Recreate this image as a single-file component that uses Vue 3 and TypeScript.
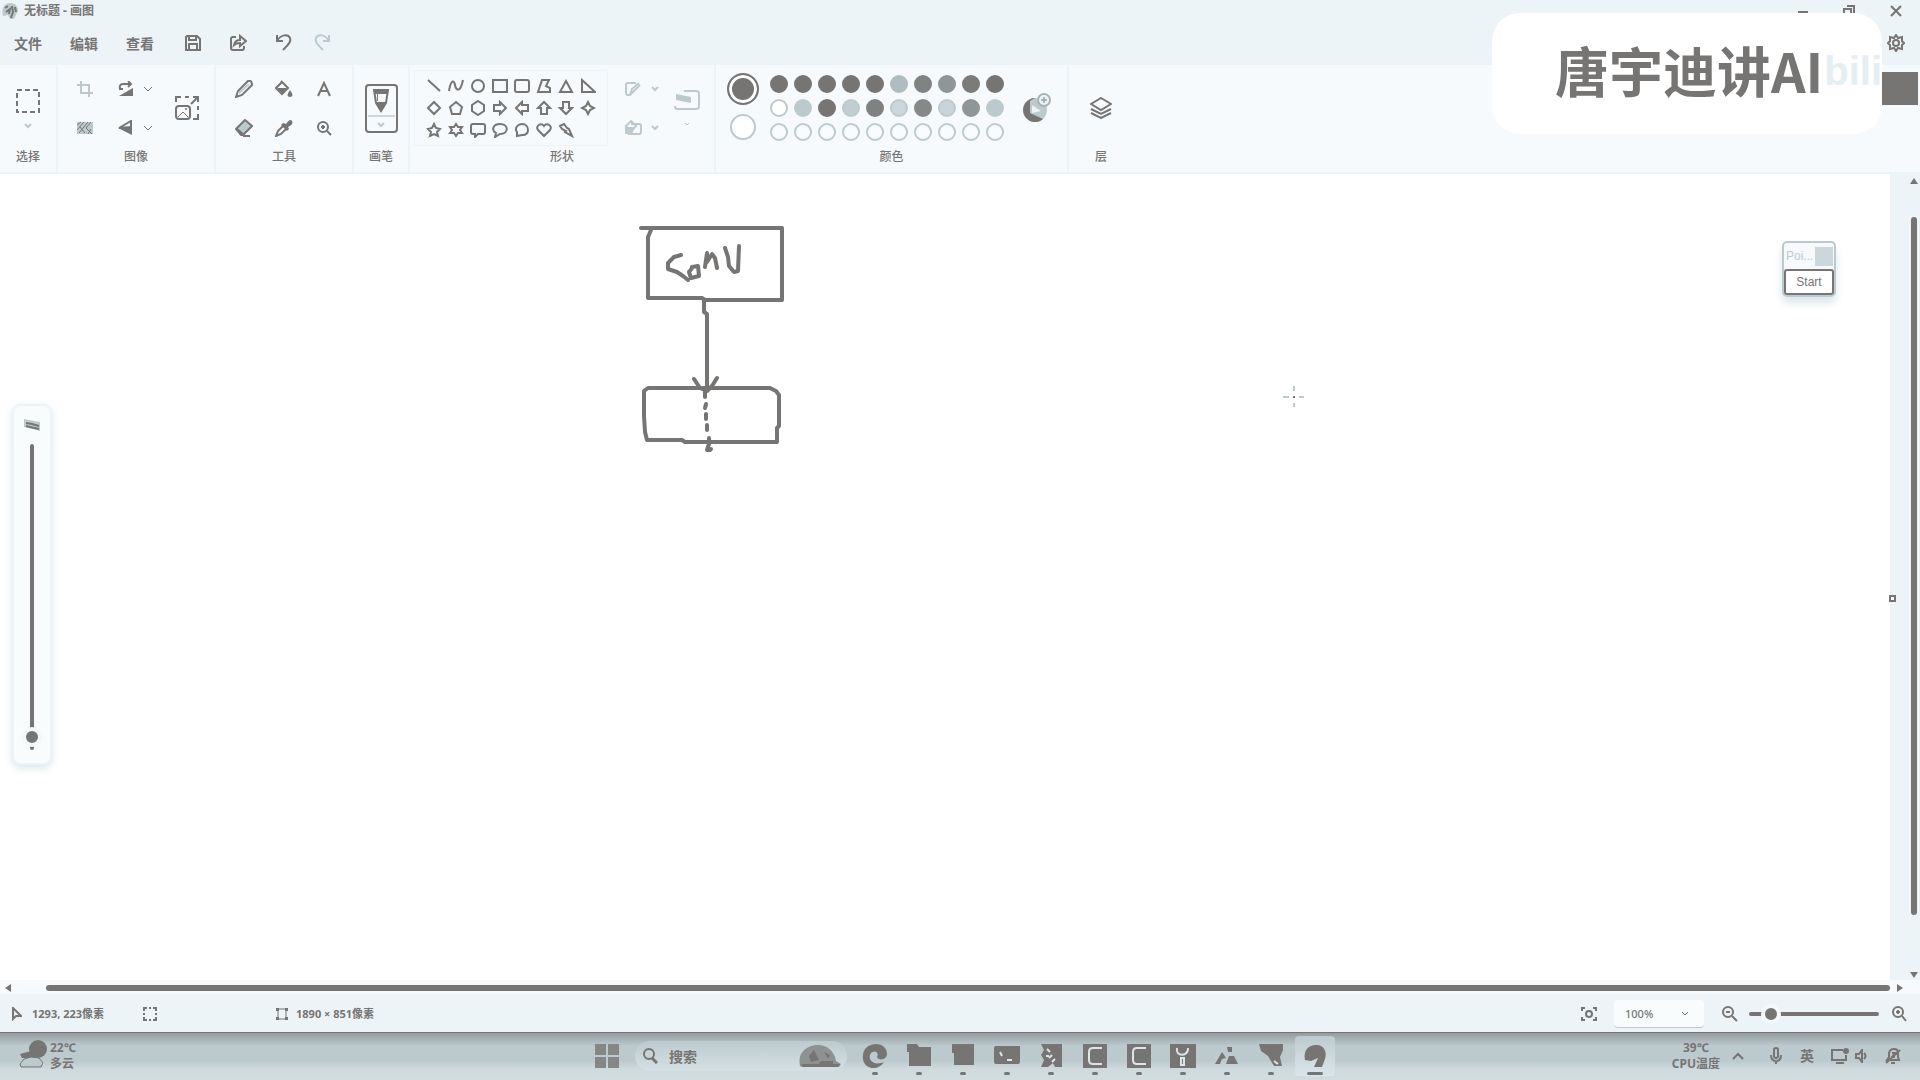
<script setup lang="ts">
import { ref } from 'vue'

interface TaskApp {
  name: string
  body: string
  lines?: string
  active?: boolean
}

const menus: string[] = ['文件', '编辑', '查看']

const shapes: { name: string; d: string }[] = [
  { name: '直线', d: 'M2 2 14 13' },
  { name: '曲线', d: 'M1 13C3 1 6 2 7 7S12 16 15 2' },
  { name: '椭圆', d: 'M8 2a6 6 0 1 0 0 12 6 6 0 1 0 0-12z' },
  { name: '矩形', d: 'M1 2H15V14H1z' },
  { name: '圆角矩形', d: 'M3 2H13Q15 2 15 4V12Q15 14 13 14H3Q1 14 1 12V4Q1 2 3 2z' },
  { name: '多边形', d: 'M6 2H13L10 8 14 10V14H2z' },
  { name: '三角形', d: 'M8 3 14 14H2z' },
  { name: '直角三角形', d: 'M2 2 15 14H2z' },
  { name: '菱形', d: 'M8 2 14 8 8 14 2 8z' },
  { name: '五边形', d: 'M8 2 14 7 12 14H4L2 7z' },
  { name: '六边形', d: 'M8 1 14 5V11L8 15 2 11V5z' },
  { name: '右箭头', d: 'M2 5H8V2L14 8 8 14V11H2z' },
  { name: '左箭头', d: 'M14 5H8V2L2 8 8 14V11H14z' },
  { name: '上箭头', d: 'M5 14V8H2L8 2 14 8H11V14z' },
  { name: '下箭头', d: 'M5 2V8H2L8 14 14 8H11V2z' },
  { name: '四角星', d: 'M8 2 10 6 14 8 10 10 8 14 6 10 2 8 6 6z' },
  { name: '五角星', d: 'M8 2 10 6 14 7 11 10 12 14 8 12 4 14 5 10 2 7 6 6z' },
  { name: '六角星', d: 'M8 2 10 5H14L12 8 14 11H10L8 14 6 11H2L4 8 2 5H6z' },
  { name: '圆角标注', d: 'M3 2H13Q15 2 15 4V10Q15 12 13 12H8L5 15V12H3Q1 12 1 10V4Q1 2 3 2z' },
  { name: '椭圆标注', d: 'M8 2C17 2 17 12 8 12L3 15 4 11C-1 8 1 2 8 2z' },
  { name: '云形标注', d: 'M8 2C16 2 16 14 8 13L3 14V10C0 6 4 2 8 2z' },
  { name: '心形', d: 'M8 14 2 8C-1 4 5 0 8 4 11 0 17 4 14 8z' },
  { name: '闪电', d: 'M2 4 6 2 9 6 11 7 14 14 7 10 8 9 4 7z' },
]

const dark = '#767573'
const mid = '#bccace'
const palette: { fill: string; edge: string }[] = [
  ...[dark, dark, dark, dark, dark, '#b0bdc0', '#808382', '#8f9696', '#7b7b7a', dark].map((fill) => ({ fill, edge: fill })),
  ...['#ffffff', mid, dark, '#c0cdd1', '#7f8281', '#cbd7db', '#858988', '#c8d4d8', '#8f9696', mid].map((fill) => ({
    fill,
    edge: fill === dark || fill.startsWith('#7f') || fill.startsWith('#8') ? fill : mid,
  })),
  ...Array.from({ length: 10 }, () => ({ fill: '#f9fcfd', edge: mid })),
]

const apps: TaskApp[] = [
  { name: 'Edge', body: 'M1 12C2-2 25-3 25 11C25 17 16 18 15 14C18 8 10 6 8 12C6 18 13 23 22 19C15 30-1 25 1 12z' },
  { name: '文件资源管理器', body: 'M1 1H11L13 4H25V23H3V9H1z' },
  { name: '应用', body: 'M2 1H24V22H4V10H2z' },
  { name: '终端', body: 'M0 5Q0 3 2 3H26V19Q26 21 24 21H2Q0 21 0 19z', lines: 'M6 9 8 13M13 17H18' },
  { name: '笔记', body: 'M3 1H24V24H17L15 20 10 24H3L6 17 3 12 6 7z', lines: 'M9 6 12 9M14 12 11 15M17 16 14 19M8 13H11' },
  { name: 'Camtasia', body: 'M1 1H25V25H1z', lines: 'M20 5H11Q7 5 7 9V17Q7 21 11 21H20' },
  { name: 'Camtasia 2', body: 'M1 1H25V25H1z', lines: 'M20 5H11Q7 5 7 9V17Q7 21 11 21H20' },
  { name: '工具', body: 'M0 1H26V25H0z', lines: 'M7 5C5 14 19 14 18 5M11 15V22H14V15z' },
  { name: '图表', body: 'M13 4H18V9H14zM8 9 12 15 8 16 6 21H1zM15 13H20L24 21H12z' },
  { name: '截图', body: 'M1 1H25V7L22 14 24 23H16L10 13 3 8z', lines: 'M16 18 20 21' },
  { name: '画图', body: 'M3 17C1 7 7 2 14 2C23 2 25 10 23 16L20 24H12L16 15 9 18z', active: true },
]

const zoom = ref<string>('100%')
const zoomLevel = ref<number>(11)
const brushSize = ref<number>(1)
</script>

<template>
  <div class="app">
    <header class="top">
      <div class="titlebar">
        <svg class="logo" width="16" height="16" viewBox="0 0 16 16"><path d="M8 0C14 0 16 4 16 8L12 16H8L6 12 1 13C-1 6 2 0 8 0z" fill="#bccace" /><path d="M3 5 6 3M4 9 8 6 7 11M10 3 11 9 9 15M13 4 14 9" fill="none" stroke="#767573" stroke-width="2" /></svg>
        <h1>无标题 - 画图</h1>
        <div class="window-buttons">
          <button aria-label="最小化"><svg width="12" height="12" viewBox="0 0 12 12"><path d="M1 7H11" class="s" /></svg></button>
          <button aria-label="还原"><svg width="12" height="12" viewBox="0 0 12 12"><path d="M1 4H8V11H1zM4 1H11V8" class="s" /></svg></button>
          <button aria-label="关闭"><svg width="12" height="12" viewBox="0 0 12 12"><path d="M1 1 11 11M11 1 1 11" class="s" /></svg></button>
        </div>
      </div>
      <nav class="menubar">
        <button v-for="m in menus" :key="m" class="menu">{{ m }}</button>
        <button class="quick" aria-label="保存"><svg width="18" height="18" viewBox="0 0 18 18"><path d="M3 2H13L16 5V16H2V3zM5 2V6H12V2M5 16V10H13V16" class="s" /></svg></button>
        <button class="quick" aria-label="共享"><svg width="18" height="18" viewBox="0 0 18 18"><path d="M7 3H4Q2 3 2 5V14Q2 16 4 16H13Q15 16 15 14V12M5 11Q6 6 11 6V2L17 7 11 12V9Q7 9 5 11z" class="s" /></svg></button>
        <button class="quick" aria-label="撤消"><svg width="18" height="18" viewBox="0 0 18 18"><path d="M3 1V7H9M3 7C7 0 14 0 16 4C17 7 16 9 9 16" class="s" /></svg></button>
        <button class="quick redo" aria-label="重做"><svg width="18" height="18" viewBox="0 0 18 18"><path d="M16 1V7H10M16 7C12 0 5 0 3 4C2 7 3 9 10 16" class="m" /></svg></button>
        <button class="settings" aria-label="设置"><svg width="18" height="18" viewBox="0 0 18 18"><path d="M9 1 11 4 15 3 15 7 17 9 15 11 15 15 11 14 9 17 7 14 3 15 3 11 1 9 3 7 3 3 7 4z" class="s" /><circle cx="9" cy="9" r="3" class="s" /></svg></button>
      </nav>

      <section class="ribbon">
        <div class="group g-select">
          <div class="body column">
            <button aria-label="选择"><svg width="24" height="24" viewBox="0 0 24 24"><path d="M1 1H23V23H1z" class="s" stroke-dasharray="5 3" /></svg></button>
            <svg width="8" height="6" viewBox="0 0 8 6"><path d="M1 1 4 4 7 1" class="m" /></svg>
          </div>
          <span class="label">选择</span>
        </div>

        <div class="group g-image">
          <div class="body">
            <div class="image-grid">
              <button aria-label="裁剪"><svg width="16" height="16" viewBox="0 0 16 16"><path d="M4 0V12H16M0 4H12V16" class="m" /></svg></button>
              <button aria-label="旋转"><svg width="16" height="16" viewBox="0 0 16 16"><path d="M10 0 13 3 10 6M13 3H5Q1 3 2 8H5" class="s" /><path d="M1 15 15 7V15z" class="f" /></svg></button>
              <svg width="10" height="6" viewBox="0 0 10 6"><path d="M1 1 5 5 9 1" class="s thin" /></svg>
              <button aria-label="移除背景"><svg width="16" height="14" viewBox="0 0 16 14"><path d="M0 1H16V13H0z" fill="#bccace" /><path d="M0 4 4 1M0 9 7 1M2 12 11 1M14 1 9 7 15 13M3 6 8 12M14 8 11 13" class="s thin" /></svg></button>
              <button aria-label="翻转"><svg width="16" height="16" viewBox="0 0 16 16"><path d="M1 8 13 1V7z" class="s" /><path d="M0 8H14V15z" class="f" /></svg></button>
              <svg width="10" height="6" viewBox="0 0 10 6"><path d="M1 1 5 5 9 1" class="s thin" /></svg>
            </div>
            <button aria-label="调整大小"><svg width="24" height="24" viewBox="0 0 24 24"><path d="M1 6V1H6M10 1H14M18 1H23V6M23 10V14M23 18V23H18M16 8 22 2" class="s" /><rect x="1" y="10" width="14" height="13" rx="3" class="s" /><path d="M3 21 8 16 13 21" class="s thin" /><circle cx="11" cy="13" r="1" class="f" /></svg></button>
          </div>
          <span class="label">图像</span>
        </div>

        <div class="group g-tools">
          <div class="body">
            <div class="tool-grid">
              <button aria-label="铅笔"><svg width="18" height="18" viewBox="0 0 18 18"><path d="M1 17 3 11 13 1Q17 0 17 5L7 15z" class="s" /><path d="M4 13 14 4" stroke="#bccace" fill="none" stroke-width="2" /></svg></button>
              <button aria-label="填充"><svg width="18" height="18" viewBox="0 0 18 18"><path d="M6 1 13 8 7 14 1 8 7 2" class="s" /><path d="M2 8H12L7 13zM15 10Q20 17 15 17T15 10z" class="f" /></svg></button>
              <button aria-label="文本"><svg width="16" height="16" viewBox="0 0 16 16"><path d="M2 15 8 2 14 15M4 10H12" class="s" /></svg></button>
              <button aria-label="橡皮擦"><svg width="18" height="18" viewBox="0 0 18 18"><path d="M1 10 10 1 17 7 8 16H6z" fill="#bccace" stroke="#767573" stroke-width="2" /><path d="M2 10 8 15M8 17H15" class="s" /></svg></button>
              <button aria-label="颜色选取器"><svg width="18" height="18" viewBox="0 0 18 18"><path d="M1 17 3 12 9 6 12 9 6 15z" class="s" /><path d="M8 4 11 5Q15-1 17 2T13 8L14 10 12 12 6 6z" class="f" /></svg></button>
              <button aria-label="放大镜"><svg width="16" height="16" viewBox="0 0 16 16"><circle cx="7" cy="7" r="5" class="s" /><path d="M11 11 15 15M7 5V9M5 7H9" class="s" /></svg></button>
            </div>
          </div>
          <span class="label">工具</span>
        </div>

        <div class="group g-brush">
          <div class="body">
            <button class="brush" aria-label="画笔">
              <svg width="16" height="24" viewBox="0 0 16 24"><path d="M1 1H15L13 14 8 22 3 14z" class="s" /><path d="M2 1H14V5H2zM3 13H13L8 23zM4 5V12H5V5z" class="f" /></svg>
              <i></i>
              <svg width="8" height="6" viewBox="0 0 8 6"><path d="M1 1 4 4 7 1" class="m" /></svg>
            </button>
          </div>
          <span class="label">画笔</span>
        </div>

        <div class="group g-shapes">
          <div class="body">
            <div class="shape-grid">
              <button v-for="s in shapes" :key="s.name" :aria-label="s.name"><svg width="16" height="16" viewBox="0 0 16 16"><path :d="s.d" class="s" /></svg></button>
            </div>
            <div class="shape-options">
              <button aria-label="形状轮廓"><svg width="16" height="16" viewBox="0 0 16 16"><path d="M11 2H3Q1 2 1 4V12Q1 14 3 14H5L15 4M5 14 7 8 14 2" class="m" /></svg></button>
              <svg width="8" height="6" viewBox="0 0 8 6"><path d="M1 1 4 4 7 1" class="m" /></svg>
              <button aria-label="形状填充"><svg width="18" height="16" viewBox="0 0 18 16"><path d="M7 4H15Q17 4 17 6V12Q17 14 15 14H4M7 1 12 6 7 11 2 6z" class="m" /><path d="M1 7H11L8 14H1z" fill="#bccace" /></svg></button>
              <svg width="8" height="6" viewBox="0 0 8 6"><path d="M1 1 4 4 7 1" class="m" /></svg>
            </div>
            <div class="size-option">
              <button aria-label="大小"><svg width="26" height="20" viewBox="0 0 26 20"><path d="M10 1H22Q25 1 25 4V16Q25 19 22 19H3Q1 19 1 16" class="m" /><path d="M2 4 17 7V13L2 10z" fill="#bccace" /></svg></button>
              <svg width="6" height="4" viewBox="0 0 6 4"><path d="M1 1 3 3 5 1" class="m thin" /></svg>
            </div>
          </div>
          <span class="label">形状</span>
        </div>

        <div class="group g-colors">
          <div class="body">
            <div class="current">
              <button class="primary" aria-label="颜色 1"></button>
              <button class="secondary" aria-label="颜色 2"></button>
            </div>
            <div class="palette">
              <button v-for="(c, i) in palette" :key="i" :aria-label="'颜色 ' + (i + 1)" :style="{ background: c.fill, borderColor: c.edge }"></button>
            </div>
            <button aria-label="编辑颜色"><svg width="30" height="30" viewBox="0 0 30 30"><circle cx="14" cy="17" r="12" fill="#bccace" /><path d="M14 5A12 12 0 1 0 22 26L9 20 9 8z" class="f" /><path d="M11 12 20 18 11 20z" fill="#ecf4f8" /><circle cx="23" cy="7" r="6" fill="#ecf4f8" stroke="#a7b4b7" stroke-width="2" /><path d="M23 4V10M20 7H26" stroke="#a7b4b7" stroke-width="2" /></svg></button>
          </div>
          <span class="label">颜色</span>
        </div>

        <div class="group g-layers">
          <div class="body">
            <button aria-label="层"><svg width="22" height="22" viewBox="0 0 22 22"><path d="M11 1 21 7 11 13 1 7zM1 12 11 17 21 12M1 16 11 21 21 16" class="s" /></svg></button>
          </div>
          <span class="label">层</span>
        </div>
      </section>

      <div class="banner">
        <span class="name">唐宇迪讲AI</span>
        <span class="mark">bili</span>
      </div>
      <button class="tile" aria-label="Copilot"></button>
    </header>

    <main class="workspace">
      <div class="canvas">
        <svg class="drawing" width="200" height="260" viewBox="0 0 200 260" aria-label="Conv">
          <path d="M21 18H162V90H85L82 88H28V27L31 20M84 90V102L87 104V176M74 169 80 178 87 181 92 176 97 168" />
          <path d="M28 178 24 181V206L25 222 27 230H62L65 232H157V218L159 216V185L156 181 150 178H28z" />
          <path d="M61 45 54 47 48 53V59L57 62 63 66 68 70M72 57 78 56 79 66 71 68 69 62 73 57M85 57 87 43V52L92 44 95 48 97 58M105 38 108 47 109 56 114 62 118 61 119 36" />
          <path d="M85 182V187M86 194 85 198M86 204V209M87 215V220M89 228V234L87 240H90L91 239" />
        </svg>
        <svg class="cursor" width="22" height="22" viewBox="0 0 22 22"><path d="M0 11H6M16 11H21M11 0V5M11 17V21" class="m" /><path d="M10 11H12" class="s" /></svg>
        <div class="size-panel">
          <svg width="16" height="14" viewBox="0 0 16 14"><path d="M0 1 16 4V13L0 9z" fill="#bccace" /><path d="M2 5 8 6 15 8M2 8 15 11" class="s" /></svg>
          <input v-model.number="brushSize" type="range" min="0" max="100" aria-label="画笔大小" />
        </div>
        <div class="pointer-panel">
          <div class="pointer-head"><span>Poi...</span><i></i></div>
          <button>Start</button>
        </div>
      </div>
      <div class="vscroll">
        <i class="handle"></i>
        <svg width="8" height="6" viewBox="0 0 8 6"><path d="M0 6 4 0 8 6z" class="f" /></svg>
        <i class="vthumb"></i>
        <svg width="8" height="6" viewBox="0 0 8 6"><path d="M0 0 4 6 8 0z" class="f" /></svg>
      </div>
    </main>

    <div class="hscroll">
      <svg width="6" height="8" viewBox="0 0 6 8"><path d="M6 0 0 4 6 8z" class="f" /></svg>
      <i class="hthumb"></i>
      <svg width="6" height="8" viewBox="0 0 6 8"><path d="M0 0 6 4 0 8z" class="f" /></svg>
    </div>

    <footer class="status">
      <div class="stat position">
        <svg width="10" height="14" viewBox="0 0 10 14"><path d="M1 1V12L4 9H9z" class="s" /></svg>
        <span>1293, 223像素</span>
      </div>
      <div class="stat selection"><svg width="14" height="14" viewBox="0 0 14 14"><path d="M1 4V1H4M6 1H8M10 1H13V4M13 6V8M13 10V13H10M8 13H6M4 13H1V10M1 8V6" class="s" /></svg></div>
      <div class="stat">
        <svg width="12" height="14" viewBox="0 0 12 14"><path d="M2 2H10V12H2z" class="s thin" /><path d="M0 1H3V4H0zM9 1H12V4H9zM0 10H3V13H0zM9 10H12V13H9z" class="f" /></svg>
        <span>1890 × 851像素</span>
      </div>
      <div class="zoom">
        <button aria-label="适应窗口"><svg width="16" height="14" viewBox="0 0 16 14"><path d="M1 4V1H4M12 1H15V4M15 10V13H12M4 13H1V10" class="s" /><circle cx="8" cy="7" r="3" class="s" /></svg></button>
        <div class="zoom-box">
          <select v-model="zoom" aria-label="缩放"><option>100%</option><option>200%</option></select>
          <svg width="8" height="6" viewBox="0 0 8 6"><path d="M1 1 4 4 7 1" class="s thin" /></svg>
        </div>
        <button aria-label="缩小"><svg width="16" height="16" viewBox="0 0 16 16"><circle cx="6" cy="6" r="5" class="s" /><path d="M10 10 15 15M4 6H8" class="s" /></svg></button>
        <input v-model.number="zoomLevel" type="range" min="0" max="100" aria-label="缩放比例" />
        <button aria-label="放大"><svg width="16" height="16" viewBox="0 0 16 16"><circle cx="7" cy="6" r="5" class="s" /><path d="M11 10 15 15M5 6H9M7 4V8" class="s" /></svg></button>
      </div>
    </footer>

    <div class="taskbar">
      <div class="weather">
        <svg width="28" height="30" viewBox="0 0 28 30"><circle cx="19" cy="9" r="9" class="f" /><path d="M1 14 12 11 16 18 3 18z" class="f" /><path d="M1 24 5 19 12 17 20 18 24 23 22 27H2z" fill="#bccace" stroke="#767573" /></svg>
        <div><span>22℃</span><span>多云</span></div>
      </div>
      <div class="dock">
        <button class="start" aria-label="开始"><svg width="24" height="24" viewBox="0 0 24 24"><path d="M0 0H11V11H0zM13 0H24V11H13zM0 13H11V24H0zM13 13H24V24H13z" fill="#838786" /></svg></button>
        <label class="search">
          <svg width="16" height="16" viewBox="0 0 16 16"><circle cx="7" cy="6" r="5" class="s" /><path d="M10 10 15 15" stroke="#767573" stroke-width="3" /></svg>
          <input type="text" placeholder="搜索" aria-label="搜索" />
          <svg width="42" height="24" viewBox="0 0 42 24"><path d="M1 22C-2 8 8 2 17 1C28 0 36 8 37 17L42 20 40 23H3z" fill="#8d9393" /><path d="M2 20H41L39 23H4zM10 12 15 6 20 16 12 18zM25 8 31 11 29 15zM22 17H34V20H20z" class="f" /></svg>
        </label>
        <button v-for="a in apps" :key="a.name" class="task" :class="{ active: a.active }" :aria-label="a.name">
          <svg width="26" height="26" viewBox="0 0 26 26"><path :d="a.body" class="f" /><path v-if="a.lines" :d="a.lines" fill="none" stroke="#dce6ea" stroke-width="2" /></svg>
          <i></i>
        </button>
      </div>
      <div class="tray">
        <div class="temp"><span>39℃</span><span>CPU温度</span></div>
        <svg width="12" height="8" viewBox="0 0 12 8"><path d="M1 7 6 2 11 7" class="s" /></svg>
        <svg width="12" height="18" viewBox="0 0 12 18"><rect x="4" y="1" width="4" height="10" rx="2" class="s" /><path d="M1 8Q1 14 6 14T11 8M6 14V17" class="s" /></svg>
        <span class="ime">英</span>
        <svg width="18" height="16" viewBox="0 0 18 16"><path d="M12 2H1V12H15V7M5 15H13" class="s" /><circle cx="15" cy="3" r="3" class="f" /></svg>
        <svg width="12" height="14" viewBox="0 0 12 14"><path d="M1 5H4L7 1V13L4 9H1zM9 4Q12 7 9 10" class="s" /></svg>
        <svg class="bell" width="16" height="16" viewBox="0 0 16 16"><path d="M2 12 4 9V5Q5 1 9 1T13 5V9L14 12zM6 15H10M1 15 15 2M7 5H10L7 9H10" class="s" /></svg>
      </div>
    </div>
  </div>
</template>

<style>
body {
  margin: 0;
}
</style>

<style scoped>
* {
  box-sizing: border-box;
}
.app {
  display: flex;
  flex-direction: column;
  min-height: 100vh;
  background: #fff;
  color: #767573;
  font: 12px/16px "Noto Sans", "Noto Sans CJK SC", sans-serif;
}
button {
  display: flex;
  align-items: center;
  justify-content: center;
  padding: 0;
  border: 0;
  background: none;
  color: inherit;
  font: inherit;
}
svg {
  display: block;
  flex: none;
}
i {
  display: block;
}
.s {
  fill: none;
  stroke: #767573;
  stroke-width: 2;
}
.m {
  fill: none;
  stroke: #bccace;
  stroke-width: 2;
}
.f {
  fill: #767573;
}
.thin {
  stroke-width: 1;
}
.top {
  position: relative;
  background: #ecf4f8;
}
.titlebar {
  display: flex;
  align-items: center;
  height: 22px;
  padding-left: 2px;
  gap: 6px;
}
h1 {
  margin: 0;
  font-size: 12px;
  line-height: 16px;
  font-weight: 700;
}
.window-buttons {
  display: flex;
  margin-left: auto;
}
.window-buttons button {
  width: 46px;
  height: 20px;
}
.window-buttons button:last-child {
  width: 48px;
}
.menubar {
  display: flex;
  align-items: center;
  height: 43px;
}
.menu {
  width: 56px;
  font-size: 14px;
  line-height: 20px;
  font-weight: 700;
}
.quick {
  width: 45px;
  padding-bottom: 2px;
}
.quick:nth-of-type(4) {
  margin-left: 2px;
}
.redo {
  width: 34px;
}
.settings {
  width: 48px;
  margin-left: auto;
  padding-bottom: 2px;
}
.ribbon {
  display: flex;
  height: 109px;
  background: #f6fafc;
  border-bottom: 2px solid #ecf4f8;
}
.group {
  display: flex;
  flex-direction: column;
  padding-bottom: 7px;
  border-right: 2px solid #ecf4f8;
}
.body {
  display: flex;
  flex: 1;
  align-items: center;
  justify-content: center;
  padding-top: 2px;
}
.label {
  text-align: center;
  font-weight: 500;
}
.g-select {
  width: 58px;
}
.column {
  flex-direction: column;
  gap: 10px;
  padding-top: 4px;
}
.g-image {
  width: 158px;
}
.g-image .body {
  padding-right: 15px;
}
.image-grid {
  display: grid;
  grid-template-columns: 52px 30px 14px;
  grid-template-rows: 39px 39px;
  align-items: center;
  justify-items: center;
  margin-right: 20px;
}
.g-tools {
  width: 138px;
}
.tool-grid {
  display: grid;
  grid-template-columns: repeat(3, 40px);
  grid-template-rows: 39px 39px;
  align-items: center;
}
.g-brush {
  width: 56px;
}
.brush {
  flex-direction: column;
  width: 33px;
  height: 49px;
  border: 2px solid #767573;
  border-radius: 4px;
}
.brush i {
  width: 27px;
  height: 2px;
  margin: 2px 0 5px;
  background: #cbd7db;
}
.g-shapes {
  width: 306px;
}
.g-shapes .body {
  padding-right: 10px;
}
.shape-grid {
  display: grid;
  grid-template-columns: repeat(8, 22px);
  grid-auto-rows: 22px;
  padding: 4px 8px;
  border: 1px solid #ecf4f8;
}
.shape-options {
  display: grid;
  grid-template-columns: 22px 22px;
  grid-template-rows: 39px 39px;
  align-items: center;
  justify-items: center;
  margin-left: 14px;
}
.size-option {
  display: flex;
  flex-direction: column;
  align-items: center;
  gap: 12px;
  margin-left: 8px;
}
.g-colors {
  width: 353px;
}
.g-colors .body {
  padding-right: 6px;
}
.current {
  display: flex;
  flex-direction: column;
  align-items: center;
  gap: 9px;
  margin-right: 8px;
  padding-bottom: 4px;
}
.primary {
  width: 32px;
  height: 32px;
  border: 2px solid #767573;
  border-radius: 50%;
  background: #767573;
  box-shadow: inset 0 0 0 3px #fff;
}
.secondary {
  width: 26px;
  height: 26px;
  border: 2px solid #bccace;
  border-radius: 50%;
  background: #fff;
}
.palette {
  display: grid;
  grid-template-columns: repeat(10, 24px);
  grid-auto-rows: 24px;
  align-items: center;
  justify-items: center;
  margin-right: 14px;
}
.palette button {
  width: 18px;
  height: 18px;
  border: 2px solid;
  border-radius: 50%;
}
.g-layers {
  width: 64px;
  border-right: 0;
}
.banner {
  position: absolute;
  top: 13px;
  right: 38px;
  width: 390px;
  height: 121px;
  border-radius: 28px;
  background: #fff;
}
.name {
  position: absolute;
  top: 17px;
  left: 63px;
  font: 700 54px/80px "Noto Sans CJK SC", sans-serif;
  white-space: nowrap;
}
.mark {
  position: absolute;
  top: 28px;
  right: 0;
  color: #e4eef3;
  font: 700 40px/60px "Liberation Sans", sans-serif;
}
.tile {
  position: absolute;
  top: 72px;
  right: 2px;
  width: 36px;
  height: 33px;
  background: #767573;
}
.workspace {
  display: flex;
  flex: 1;
  min-height: 600px;
}
.canvas {
  position: relative;
  flex: 1;
}
.drawing {
  position: absolute;
  top: 36px;
  left: 620px;
  fill: none;
  stroke: #767573;
  stroke-width: 4;
  stroke-linejoin: round;
  stroke-linecap: round;
}
.cursor {
  position: absolute;
  top: 212px;
  left: 1283px;
}
.size-panel {
  position: absolute;
  top: 230px;
  left: 12px;
  display: flex;
  flex-direction: column;
  align-items: center;
  gap: 12px;
  width: 40px;
  height: 361px;
  padding-top: 12px;
  border: 2px solid #ecf4f8;
  border-radius: 8px;
  background: #f9fcfd;
  box-shadow: 0 3px 8px #dce6ea;
}
input[type="range"] {
  appearance: none;
  margin: 0;
  background: none;
}
input[type="range"]::-webkit-slider-runnable-track {
  height: 4px;
  border-radius: 2px;
  background: #767573;
}
input[type="range"]::-webkit-slider-thumb {
  appearance: none;
  width: 20px;
  height: 20px;
  margin-top: -8px;
  border: 4px solid #f3f8fb;
  border-radius: 50%;
  background: #767573;
}
.size-panel input {
  width: 20px;
  height: 306px;
  writing-mode: vertical-lr;
  direction: rtl;
}
.size-panel input::-webkit-slider-runnable-track {
  width: 4px;
  height: 306px;
}
.size-panel input::-webkit-slider-thumb {
  margin-top: 0;
  margin-left: -8px;
}
.pointer-panel {
  position: absolute;
  top: 67px;
  right: 54px;
  width: 54px;
  border: 2px solid #bccace;
  border-radius: 5px;
  background: #f6fafc;
  box-shadow: 0 6px 8px #dce6ea;
}
.pointer-head {
  display: flex;
  align-items: center;
  justify-content: space-between;
  height: 26px;
  padding: 0 1px 0 2px;
  color: #bccace;
  font: 12px/16px "Liberation Sans", sans-serif;
}
.pointer-head i {
  width: 18px;
  height: 19px;
  background: #cbd7db;
}
.pointer-panel button {
  width: 50px;
  height: 26px;
  border: 2px solid #767573;
  border-radius: 3px;
  background: #fff;
  font: 12px/16px "Liberation Sans", sans-serif;
}
.vscroll {
  position: relative;
  display: flex;
  flex-direction: column;
  align-items: flex-end;
  width: 30px;
  padding: 4px 2px 2px 0;
  background: #ecf4f8;
}
.handle {
  position: absolute;
  top: 421px;
  left: -1px;
  width: 7px;
  height: 7px;
  border: 2px solid #767573;
  background: #fff;
}
.vthumb {
  flex: 1;
  width: 6px;
  margin: 33px 1px 57px 0;
  border-radius: 3px;
  background: #767573;
}
.hscroll {
  display: flex;
  align-items: center;
  height: 14px;
  padding: 1px 17px 0 5px;
  background: #f6fafc;
}
.hthumb {
  flex: 1;
  height: 6px;
  margin: 0 7px 0 35px;
  border-radius: 3px;
  background: #767573;
}
.status {
  display: flex;
  align-items: center;
  height: 38px;
  padding: 2px 13px 0 12px;
  background: #ecf4f8;
}
.stat {
  display: flex;
  align-items: center;
  gap: 8px;
  font-size: 11px;
  font-weight: 700;
}
.position {
  width: 131px;
  gap: 10px;
}
.selection {
  width: 133px;
}
.zoom {
  display: flex;
  align-items: center;
  margin-left: auto;
}
.zoom-box {
  display: flex;
  align-items: center;
  width: 90px;
  height: 28px;
  margin: 0 18px 0 17px;
  padding: 0 15px 0 11px;
  border-bottom: 1px solid #bccace;
  border-radius: 4px;
  background: #f9fcfd;
}
select {
  flex: 1;
  appearance: none;
  padding: 0;
  border: 0;
  background: none;
  color: inherit;
  font: 500 11px/16px "Noto Sans", sans-serif;
}
.zoom > input {
  width: 130px;
  height: 20px;
  margin: 0 12px 0 11px;
}
.taskbar {
  display: flex;
  align-items: center;
  justify-content: space-between;
  height: 48px;
  padding-bottom: 2px;
  border-top: 1px solid #767573;
  background: linear-gradient(#949b9c 0, #bccace 13px, #bccace 28px, #cfdadd 36px, #d2dde0 48px);
}
.weather {
  display: flex;
  flex: 1 1 0;
  gap: 3px;
  padding-left: 19px;
}
.weather span,
.temp span {
  display: block;
}
.weather div {
  font-weight: 700;
}
.dock {
  display: flex;
  align-items: center;
  margin-right: 4px;
}
.start {
  width: 56px;
}
.search {
  display: flex;
  align-items: center;
  width: 212px;
  height: 30px;
  margin-right: 6px;
  padding: 0 6px 0 7px;
  border-radius: 15px;
  background: linear-gradient(#bccace, #d6e0e4);
}
.search input {
  flex: 1;
  min-width: 0;
  margin-left: 11px;
  padding: 0;
  border: 0;
  background: none;
  color: inherit;
  font: 700 14px/20px "Noto Sans CJK SC", sans-serif;
}
.search input::placeholder {
  color: #767573;
}
.task {
  position: relative;
  width: 40px;
  height: 40px;
  margin: 0 2px;
  border-radius: 4px;
}
.task i {
  position: absolute;
  bottom: 1px;
  left: 17px;
  width: 6px;
  height: 3px;
  border-radius: 2px;
  background: #767573;
}
.task.active {
  background: linear-gradient(#bccace, #dce6ea);
}
.task.active i {
  left: 12px;
  width: 16px;
}
.tray {
  display: flex;
  flex: 1 1 0;
  align-items: center;
  justify-content: flex-end;
  padding-right: 19px;
}
.temp {
  margin-right: 12px;
  font-weight: 700;
  text-align: center;
}
.ime {
  margin: 0 17px 0 18px;
  font-size: 14px;
  font-weight: 700;
}
.tray svg:nth-of-type(2) {
  margin-left: 26px;
}
.tray svg:nth-of-type(4) {
  margin-left: 6px;
}
.bell {
  margin-left: 18px;
}
</style>
